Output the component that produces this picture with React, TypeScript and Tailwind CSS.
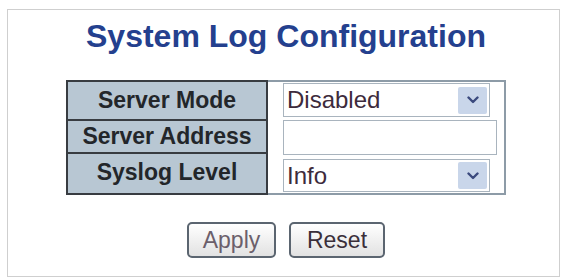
import React from 'react';

const font = { fontFamily: '"Liberation Sans", Arial, sans-serif' };

function Chevron() {
  return (
    <svg width="12" height="8" viewBox="0 0 12 8">
      <path d="M1.5 1.5 L6 6 L10.5 1.5" fill="none" stroke="#3b4a7e" strokeWidth="2.4" strokeLinecap="round" strokeLinejoin="round" />
    </svg>
  );
}

function SelectBox({ value, height }: { value: string; height: string }) {
  return (
    <div className={`flex w-[207px] items-center border border-[#a9b4be] bg-white pl-[3px] pr-[2px] ${height}`}>
      <span className="flex-1 text-[24px] leading-none text-[#3d2b3c]">{value}</span>
      <div className="flex h-[27px] w-[29px] items-center justify-center rounded-[2px] bg-[#c9d6ea]">
        <Chevron />
      </div>
    </div>
  );
}

export default function App() {
  const labels = ['Server Mode', 'Server Address', 'Syslog Level'];

  return (
    <div className="min-h-screen bg-white pl-[7px] pt-[9px]" style={font}>
      <div className="flex h-[268px] w-[553px] flex-col items-center border border-[#cfcfcf] pl-[5px] pt-[8px]">
        {/* Title */}
        <h1 className="text-[32px] font-bold leading-[37px] text-[#24408e]">System Log Configuration</h1>

        {/* Config table */}
        <div className="mt-[25px] flex h-[115px] w-[440px]">
          <div className="flex w-[202px] flex-col border-2 border-[#383c41] bg-[#b8c7d3]">
            {labels.map((label, i) => (
              <div
                key={label}
                className={`flex items-center justify-center text-[23px] font-bold leading-none text-[#23262a] ${
                  i === 0 ? 'h-[37px]' : i === 1 ? 'h-[35px] border-y-2 border-[#383c41]' : 'h-[37px]'
                }`}
              >
                {label}
              </div>
            ))}
          </div>
          <div className="flex w-[238px] flex-col border-2 border-l-0 border-[#8d9ba7] bg-white pl-[15px] pt-[1px]">
            <SelectBox value="Disabled" height="h-[34px]" />
            <input
              type="text"
              className="mt-[3px] h-[35px] w-[214px] border border-[#a9b4be] bg-white outline-none"
            />
            <div className="mt-[4px]">
              <SelectBox value="Info" height="h-[33px]" />
            </div>
          </div>
        </div>

        {/* Buttons */}
        <div className="mt-[27px] flex gap-[13px]">
          <button className="h-[36px] w-[89px] rounded-[5px] border-2 border-[#5b6570] bg-gradient-to-b from-white to-[#e2e2e2] text-[23px] leading-none text-[#6b5f6b]">
            Apply
          </button>
          <button className="h-[36px] w-[96px] rounded-[5px] border-2 border-[#5b6570] bg-gradient-to-b from-white to-[#e2e2e2] text-[23px] leading-none text-[#3a2f3a]">
            Reset
          </button>
        </div>
      </div>
    </div>
  );
}
